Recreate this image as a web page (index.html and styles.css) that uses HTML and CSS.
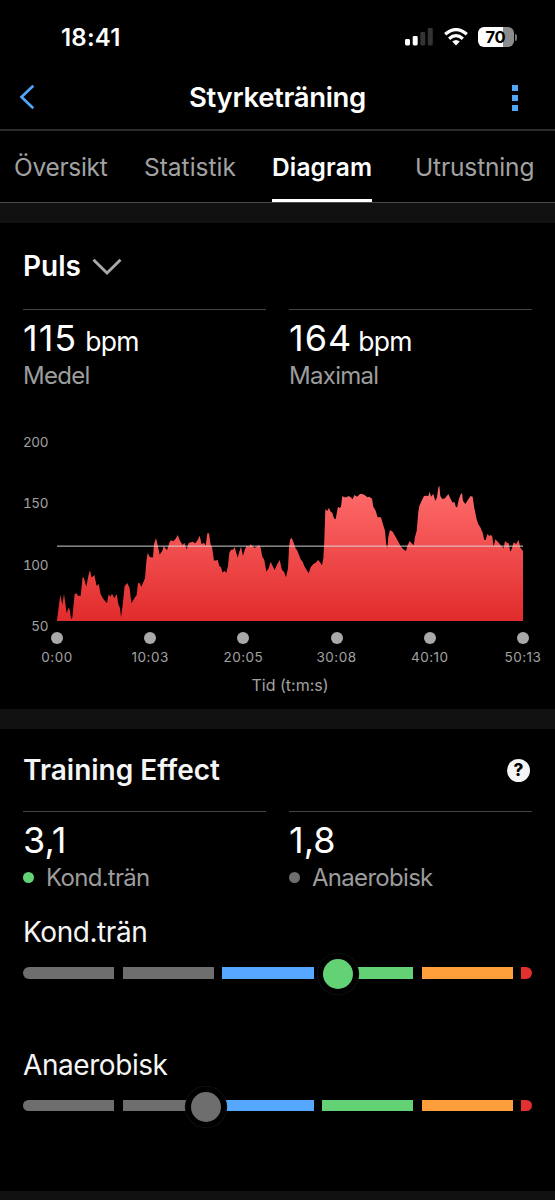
FILE: index.html
```html
<!DOCTYPE html>
<html lang="sv">
<head>
<meta charset="utf-8">
<title>Styrketräning</title>
<link rel="stylesheet" href="styles.css">
</head>
<body>
<div class="screen">
  <div class="status">
    <span class="clock">18:41</span>
    <div class="status-icons">
      <svg class="signal" width="28" height="18" viewBox="0 0 28 18">
        <rect x="0" y="11" width="5" height="6.5" rx="1.4" fill="#fff"/>
        <rect x="7.7" y="8" width="5" height="9.500" rx="1.4" fill="#fff"/>
        <rect x="15.3" y="4" width="5" height="13.500" rx="1.4" fill="#333"/>
        <rect x="22.800" y="0" width="5" height="17.500" rx="1.4" fill="#333"/>
      </svg>
      <svg class="wifi" width="24" height="18" viewBox="0 0 24 18">
        <g fill="none" stroke="#fff" stroke-width="3.200">
          <path d="M1.200 6.300Q12 -3.100 22.800 6.300"/>
          <path d="M5.100 10.700Q12 4.700 18.900 10.700"/>
        </g>
        <path d="M8.200 13.600Q12 10.400 15.800 13.600L12 17.500Z" fill="#fff"/>
      </svg>
      <div class="battery"><span class="battery-body">70</span><span class="battery-tip"></span></div>
    </div>
  </div>
  <header class="nav">
    <svg class="back" width="16" height="26" viewBox="0 0 16 26"><path d="M14.300 1.700L2.500 13L14.300 24.300" fill="none" stroke="#53a5f8" stroke-width="2.700"/></svg>
    <h1 class="title">Styrketräning</h1>
    <div class="more"><i></i><i></i><i></i></div>
  </header>
  <nav class="tabs">
    <span class="tab tab-overview">Översikt</span>
    <span class="tab tab-stats">Statistik</span>
    <span class="tab tab-chart">Diagram</span>
    <span class="tab tab-gear">Utrustning</span>
  </nav>
  <div class="band"></div>

  <section class="pulse">
    <div class="head head-pulse">
      <h2 class="h-puls">Puls</h2>
      <svg class="chevron" width="30" height="18" viewBox="0 0 30 18"><path d="M1.500 1.800L15 15L28.500 1.800" fill="none" stroke="#a9a9a9" stroke-width="2.900"/></svg>
    </div>
    <div class="metrics">
      <div class="metric"><div class="value"><span class="n1">115</span><small>bpm</small></div><div class="label l-medel">Medel</div></div>
      <div class="metric"><div class="value"><span class="n2">164</span><small>bpm</small></div><div class="label l-max">Maximal</div></div>
    </div>
    <div class="chart">
      <div class="yaxis"><span>200</span><span>150</span><span>100</span><span>50</span></div>
      <div class="plot">
        <svg class="area" width="466" height="141" viewBox="51 0 1398 423" preserveAspectRatio="none">
          <defs><linearGradient id="heat" gradientUnits="userSpaceOnUse" x1="0" y1="18" x2="0" y2="423"><stop offset="0" stop-color="#ff6c6c"/><stop offset="1" stop-color="#e12b2c"/></linearGradient></defs>
          <path fill="url(#heat)" d="M51 423L51 420L57 375L61 344L67 374L72 342L80 400L86 382L90 393L93 417L97 413L104 342L110 340L114 348L122 347L128 290L132 295L139 320L145 288L150 270L154 292L158 290L163 285L170 318L176 312L182 343L190 357L201 370L206 343L211 350L216 341L223 355L230 342L235 372L240 385L243 412L248 375L254 318L262 309L269 325L274 370L284 353L290 345L294 310L298 308L304 320L315 295L319 245L323 219L330 232L339 232L342 193L348 174L353 195L359 224L367 212L371 198L381 211L388 188L392 181L400 184L407 176L413 165L420 182L428 195L433 188L440 208L446 189L458 185L466 190L473 180L479 167L485 193L492 188L497 197L502 160L507 160L512 195L516 200L522 242L533 240L538 258L543 262L548 278L553 272L559 278L564 258L568 218L573 209L579 209L584 201L593 233L598 215L603 200L609 228L614 210L620 197L627 200L632 193L643 204L650 200L657 195L662 203L667 230L673 240L679 275L686 265L692 245L698 258L704 270L712 252L719 240L726 270L732 275L738 292L744 265L747 205L750 179L755 173L760 185L766 203L772 212L782 238L788 245L794 260L800 270L806 280L812 262L820 252L827 248L834 240L840 247L846 256L850 235L853 180L856 88L862 93L867 83L871 94L877 99L882 115L887 118L891 95L894 80L899 84L903 80L907 48L913 52L920 52L926 48L932 52L938 58L943 45L951 50L960 42L967 42L975 46L982 52L988 50L996 56L1000 80L1007 92L1013 112L1023 112L1028 130L1035 152L1039 195L1042 205L1045 170L1050 150L1058 155L1065 167L1075 185L1083 200L1090 208L1098 213L1103 195L1109 183L1115 190L1121 196L1125 170L1130 153L1135 95L1138 78L1145 62L1152 48L1158 47L1165 48L1169 35L1173 50L1180 42L1186 63L1191 52L1195 22L1198 18L1201 48L1207 57L1215 55L1225 42L1232 57L1238 68L1243 65L1248 82L1252 80L1256 60L1261 45L1266 38L1269 62L1276 72L1285 58L1292 48L1298 50L1303 85L1310 118L1315 133L1321 142L1328 158L1333 180L1337 180L1342 162L1348 168L1353 165L1357 170L1361 200L1366 178L1376 188L1382 196L1391 205L1395 182L1400 188L1406 190L1411 215L1416 205L1421 187L1428 192L1436 180L1441 203L1449 213L1449 423Z"/>
          <rect x="51" y="196.500" width="1398" height="4" fill="#d8d8d8" fill-opacity=".72"/>
        </svg>
        <div class="ticks">
          <div class="tick"><i></i><span>0:00</span></div>
          <div class="tick"><i></i><span>10:03</span></div>
          <div class="tick"><i></i><span>20:05</span></div>
          <div class="tick"><i></i><span>30:08</span></div>
          <div class="tick"><i></i><span>40:10</span></div>
          <div class="tick"><i></i><span>50:13</span></div>
        </div>
        <div class="xtitle">Tid (t:m:s)</div>
      </div>
    </div>
  </section>
  <div class="band"></div>

  <section class="effect">
    <div class="head head-effect">
      <h2 class="h-te">Training Effect</h2>
      <span class="help">?</span>
    </div>
    <div class="metrics">
      <div class="metric"><div class="value"><span class="n3">3,1</span></div><div class="label"><i class="dot green"></i><span class="l-kond">Kond.trän</span></div></div>
      <div class="metric"><div class="value"><span class="n4">1,8</span></div><div class="label"><i class="dot gray"></i><span class="l-ana">Anaerobisk</span></div></div>
    </div>
    <div class="gauge">
      <h3 class="g-kond">Kond.trän</h3>
      <div class="bar"><i class="gray"></i><i class="gray"></i><i class="blue"></i><i class="green"></i><i class="orange"></i><i class="red"></i><b class="knob green" style="left:315px"></b></div>
    </div>
    <div class="gauge">
      <h3 class="g-ana">Anaerobisk</h3>
      <div class="bar"><i class="gray"></i><i class="gray"></i><i class="blue"></i><i class="green"></i><i class="orange"></i><i class="red"></i><b class="knob gray" style="left:183px"></b></div>
    </div>
  </section>
  <div class="band"></div>
</div>
</body>
</html>
```
FILE: styles.css
```css
* { box-sizing: border-box; }
body { margin: 0; background: #000; color: #fff; font-family: Inter, "Liberation Sans", sans-serif; }
h1, h2, h3 { margin: 0; }
i { display: block; font-style: normal; }
svg { display: block; }
.screen { width: 555px; height: 1200px; overflow: hidden; display: flex; flex-direction: column; white-space: nowrap; }
.screen > * { flex: none; }

.status { height: 64px; padding: 24px 38px 14px 61px; display: flex; justify-content: space-between; align-items: center; }
.clock { font-size: 24px; font-weight: 600; letter-spacing: .2px; }
.status-icons { display: flex; align-items: center; gap: 10.500px; }
.battery { display: flex; align-items: center; gap: 1px; }
.battery-body { width: 36px; height: 20px; border-radius: 6px; background: linear-gradient(90deg, #fff 70%, #8c8c8c 70%); color: #000; font-size: 16.5px; font-weight: 700; line-height: 20px; text-align: center; letter-spacing: -.3px; padding-right: 1px; }
.battery-tip { width: 2px; height: 7px; border-radius: 0 2px 2px 0; background: #777; }

.nav { height: 67px; padding: 0 37px 0 19px; border-bottom: 2px solid #2c2c2c; display: grid; grid-template-columns: 60px 1fr 42px; align-items: center; }
.title { font-size: 27.5px; font-weight: 600; text-align: center; line-height: 36px; letter-spacing: -.33px; }
.more { display: grid; gap: 4px; justify-content: end; padding-top: 3px; }
.more i { width: 6px; height: 6px; background: #53a5f8; }

.tabs { height: 72px; padding: 0 20px 0 14px; border-bottom: 1px solid #4a4a4a; display: grid; grid-template-columns: 130px 128px 143px 120px; font-size: 24.5px; color: #a2a2a2; line-height: 72px; }
.tab-overview { letter-spacing: -.3px; }
.tab-gear { letter-spacing: -.15px; }
.tab-chart { color: #fff; font-weight: 600; width: 100px; height: 71px; border-bottom: 3px solid #fff; letter-spacing: .15px; }
.band { height: 20px; background: #111; }

.pulse, .effect { padding: 0 23px; }
.pulse { height: 486px; }
.effect { height: 462px; }
.head { display: flex; align-items: center; }
.head h2 { font-size: 28px; font-weight: 600; line-height: 36px; }
.head-pulse { height: 86px; gap: 11px; }
.chevron { margin-top: 2px; }
.head-effect { height: 82px; justify-content: space-between; }
.h-te { color: #f5f5f5; }
.help { width: 23px; height: 23px; margin-right: 2px; border-radius: 50%; background: #f5f5f5; color: #000; font-size: 17px; font-weight: 800; line-height: 23px; text-align: center; }

.metrics { display: grid; grid-template-columns: 243px 243px; gap: 23px; }
.metric { border-top: 1px solid #444; padding-top: 2px; }
.value { height: 52px; line-height: 52px; font-size: 36px; }
.value small { font-size: 26.5px; margin-left: 8px; letter-spacing: -.7px; }
.n1, .n2 { letter-spacing: 1px; }
.n2 + small { margin-left: 6px; }
.label { height: 22px; line-height: 23px; font-size: 24px; color: #9c9c9c; display: flex; align-items: center; letter-spacing: -.7px; }
.dot { width: 11px; height: 11px; border-radius: 50%; margin-right: 12px; }

.chart { margin-top: 24.75px; display: grid; grid-template-columns: 34px 466px; }
.yaxis { display: grid; grid-auto-rows: 61.5px; align-content: start; line-height: 62.5px; font-size: 13.5px; font-variant-numeric: tabular-nums; letter-spacing: -.4px; color: #a2a2a2; width: 24px; justify-items: end; }
.plot { padding-top: 69.25px; }
.ticks { height: 43px; padding-top: 11px; display: flex; justify-content: space-between; }
.tick { width: 0; display: flex; flex-direction: column; align-items: center; }
.tick i { width: 12px; height: 12px; border-radius: 50%; background: #a9a9a9; flex: none; }
.tick span { margin-top: 3px; line-height: 20px; font-size: 13.5px; letter-spacing: .5px; color: #a2a2a2; }
.xtitle { margin-top: 11px; line-height: 20px; font-size: 16px; color: #a2a2a2; text-align: center; }

.gauge { padding-top: 24px; height: 132.5px; }
.gauge h3 { font-size: 28px; font-weight: 400; line-height: 40px; color: #f5f5f5; letter-spacing: -.43px; }
.bar { position: relative; margin-top: 15px; height: 11.5px; display: grid; grid-template-columns: repeat(5, 91.3px) 1fr; gap: 8.4px; border-radius: 6px; }
.bar i:first-child { border-radius: 6px 0 0 6px; }
.bar i:nth-child(6) { border-radius: 0 6px 6px 0; }
.knob { position: absolute; top: 7px; width: 30px; height: 30px; border-radius: 50%; transform: translate(-50%, -50%); box-shadow: 0 0 0 5.5px #000, 0 0 0 6.2px #151515; }
.gray { background: #6e6e6e; }
.blue { background: #55a8fd; }
.green { background: #62d275; }
.orange { background: #ff9f3c; }
.red { background: #e22f2f; }
```
